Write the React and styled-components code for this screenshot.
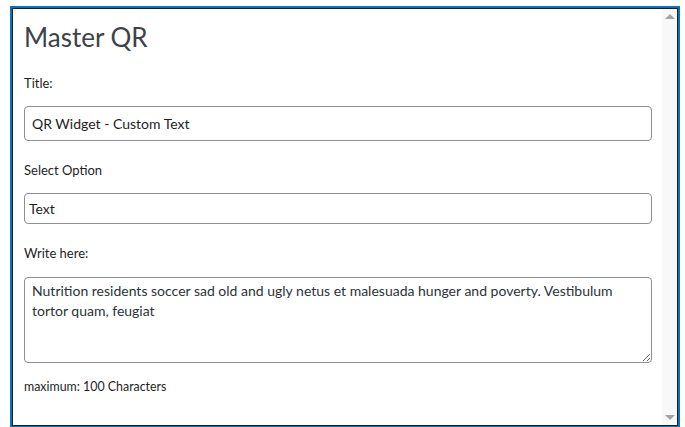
import React from 'react';
import styled, { createGlobalStyle } from 'styled-components';

const GlobalStyle = createGlobalStyle`
    html, body {
        margin: 0;
        padding: 0;
        background: #ffffff;
        overflow: hidden;
    }
    body {
        font-family: Lato, "Noto Sans", sans-serif;
        color: #1e1e1e;
    }
`

const Frame = styled('div')`
    margin: 6px 0 0 10px;
    width: 666px;
    height: 418px;
    border: 2px solid #0a72b8;
`

const Inner = styled('div')`
    display: flex;
    height: 100%;
    box-sizing: border-box;
    border: 1px solid #1e1e1e;
    background: #ffffff;
    overflow: hidden;
`

const Content = styled('form')`
    flex: 1;
    display: flex;
    flex-direction: column;
    padding: 11px 10px 0 11px;
    min-width: 0;
`

const Heading = styled('h1')`
    margin: 0 0 20px;
    font-size: 26px;
    font-weight: 400;
    line-height: 34px;
    color: #3c434a;
`

const Label = styled('label')`
    display: block;
    font-size: 13px;
    line-height: 18px;
    margin-bottom: ${props => props.gap || 14}px;
`

const Field = styled('div')`
    margin-bottom: ${props => props.gap || 20}px;
`

const TextInput = styled('input')`
    display: block;
    box-sizing: border-box;
    width: 100%;
    height: 35px;
    padding: 0 7px;
    font-family: inherit;
    font-size: 14px;
    color: #1e1e1e;
    background: #fff;
    border: 1px solid #8c8f94;
    border-radius: 4px;
    outline: none;
`

const Select = styled('select')`
    display: block;
    box-sizing: border-box;
    width: 100%;
    height: 31px;
    padding: 0 4px;
    font-family: inherit;
    font-size: 14px;
    color: #1e1e1e;
    background: #fff;
    border: 1px solid #8c8f94;
    border-radius: 4px;
    appearance: none;
    outline: none;
`

const TextArea = styled('textarea')`
    display: block;
    box-sizing: border-box;
    width: 100%;
    height: 86px;
    padding: 3px 7px;
    font-family: inherit;
    font-size: 14px;
    line-height: 20px;
    color: #2c3338;
    background: #fff;
    border: 1px solid #8c8f94;
    border-radius: 4px;
    resize: vertical;
    outline: none;
`

const Hint = styled('p')`
    margin: 0;
    font-size: 12.4px;
    line-height: 18px;
`

const ScrollTrack = styled('div')`
    width: 15px;
    flex: none;
    display: flex;
    flex-direction: column;
    justify-content: space-between;
    align-items: center;
    padding: 5px 0;
    box-sizing: border-box;
    background: #f8f8f8;
`

const Arrow = styled('span')`
    width: 0;
    height: 0;
    border-left: 5px solid transparent;
    border-right: 5px solid transparent;
    ${props => props.down
        ? 'border-top: 5px solid #a3a3a3;'
        : 'border-bottom: 5px solid #a3a3a3;'}
`

const App = () => {
    return (
        <>
            <GlobalStyle />
            <Frame>
                <Inner>
                    <Content onSubmit={e => e.preventDefault()}>
                        <Heading>Master QR</Heading>
                        <Label htmlFor='qr-title' gap={14}>Title:</Label>
                        <Field gap={20}>
                            <TextInput id='qr-title' type='text' defaultValue='QR Widget - Custom Text' />
                        </Field>
                        <Label htmlFor='qr-option' gap={14}>Select Option</Label>
                        <Field gap={20}>
                            <Select id='qr-option' defaultValue='text'>
                                <option value='text'>Text</option>
                                <option value='url'>URL</option>
                            </Select>
                        </Field>
                        <Label htmlFor='qr-text' gap={15}>Write here:</Label>
                        <Field gap={15}>
                            <TextArea
                                id='qr-text'
                                defaultValue='Nutrition residents soccer sad old and ugly netus et malesuada hunger and poverty. Vestibulum tortor quam, feugiat'
                            />
                        </Field>
                        <Hint>maximum: 100 Characters</Hint>
                    </Content>
                    <ScrollTrack>
                        <Arrow />
                        <Arrow down />
                    </ScrollTrack>
                </Inner>
            </Frame>
        </>
    )
}

export default App;
